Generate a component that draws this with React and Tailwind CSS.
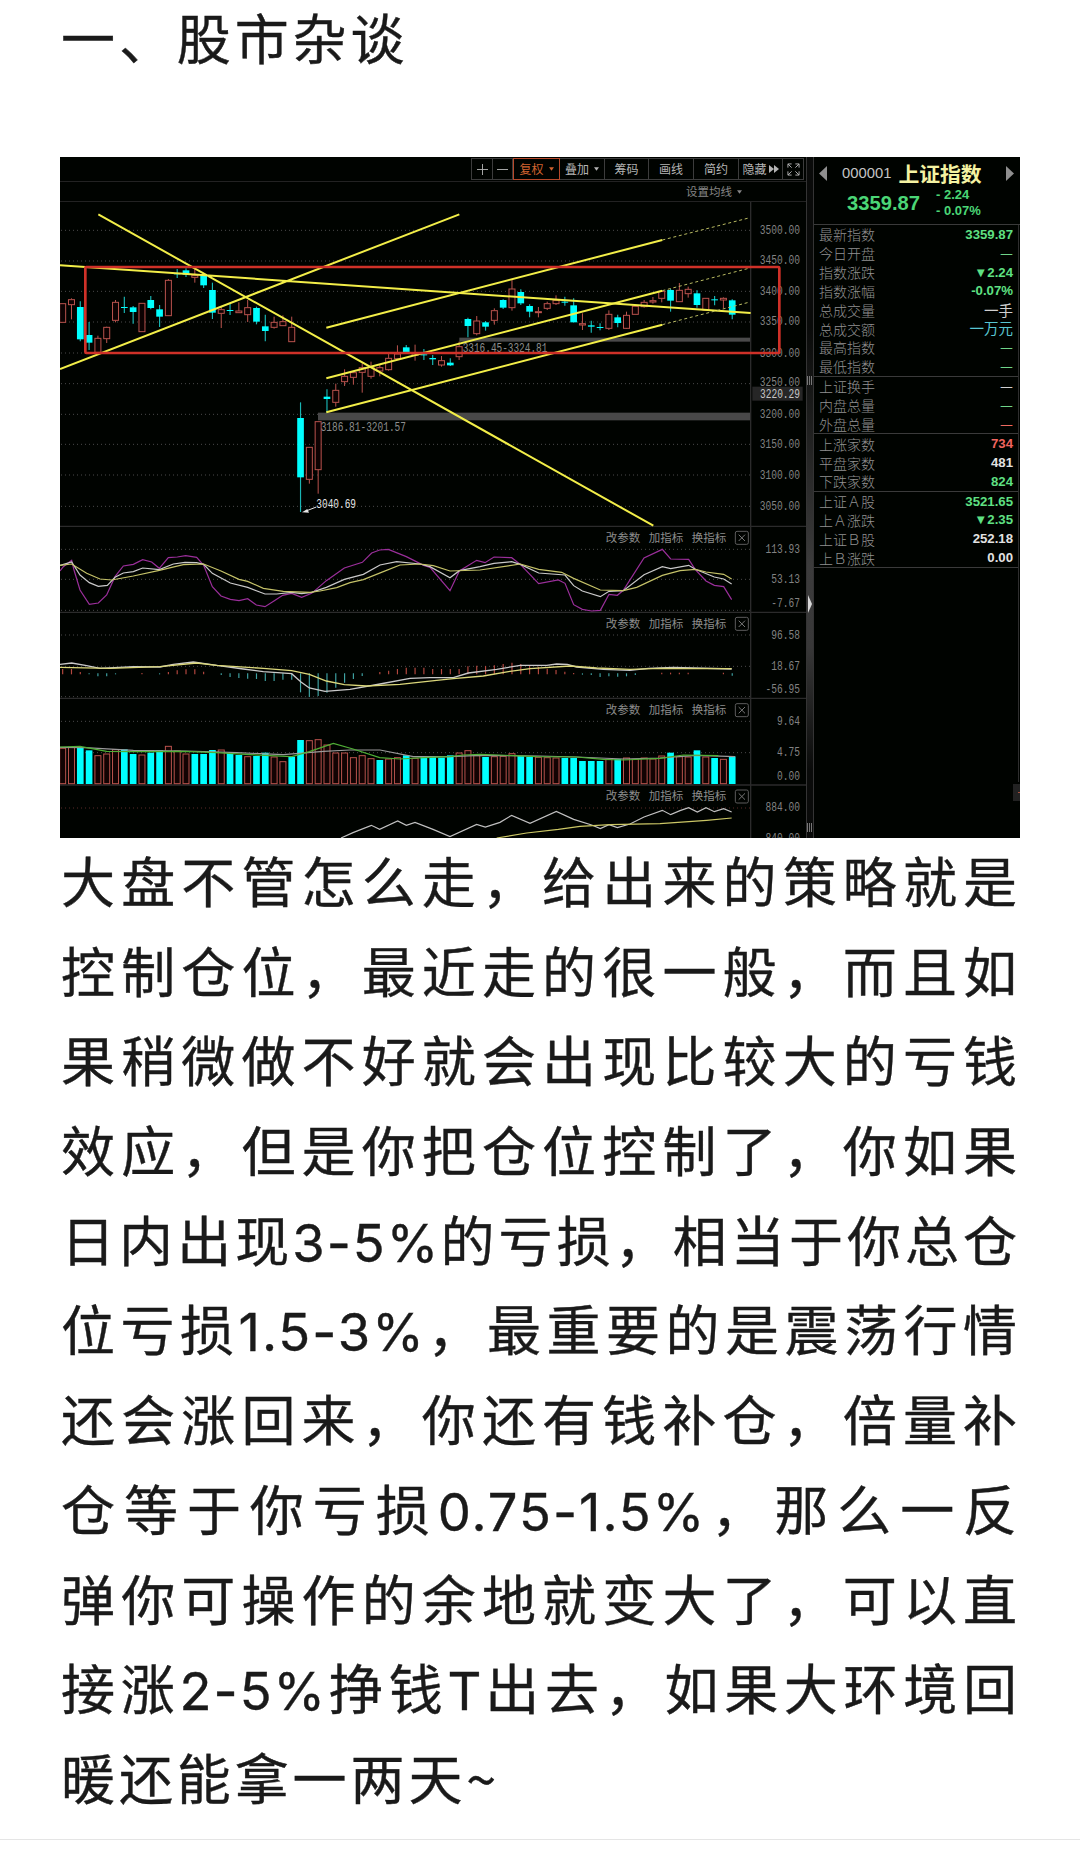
import React from 'react';

// Chart units are thirds of a pixel; bars sit on a fixed pitch
const barX = (i) => 38 + i * 26.43;

// [kind, high, bodyTop, bodyBottom, low]
const candles = [
  ['r', 461, 461, 517, 517], ['r', 445, 449, 464, 508], ['c', 454, 471, 568, 574], ['c', 516, 555, 578, 600],
  ['r', 557, 565, 607, 607], ['r', 530, 532, 566, 579], ['r', 450, 457, 511, 517], ['c', 440, 471, 474, 489],
  ['c', 468, 472, 486, 521], ['r', 460, 460, 545, 545], ['c', 438, 450, 474, 478], ['c', 465, 478, 500, 531],
  ['r', 387, 391, 497, 497], ['c', 357, 370, 373, 384], ['c', 355, 361, 374, 381], ['r', 356, 376, 382, 398],
  ['c', 372, 377, 406, 414], ['c', 398, 420, 488, 507], ['r', 470, 479, 490, 534], ['c', 460, 480, 483, 495],
  ['r', 457, 483, 488, 488], ['r', 450, 473, 494, 516], ['c', 470, 474, 515, 523], ['c', 494, 529, 543, 574],
  ['r', 500, 517, 532, 536], ['r', 496, 515, 527, 527], ['r', 500, 532, 575, 575], ['c', 757, 804, 982, 1086],
  ['r', 892, 892, 988, 1001], ['r', 815, 815, 959, 1031], ['c', 718, 740, 747, 788], ['r', 701, 721, 757, 770],
  ['r', 658, 679, 695, 708], ['r', 665, 668, 682, 704], ['r', 640, 653, 667, 728], ['r', 635, 652, 679, 686],
  ['r', 645, 653, 663, 679], ['r', 612, 625, 659, 662], ['r', 586, 612, 626, 626], ['c', 585, 592, 607, 612],
  ['r', 584, 610, 616, 632], ['c', 597, 613, 616, 630], ['c', 615, 624, 628, 645], ['r', 618, 632, 645, 650],
  ['c', 625, 638, 646, 648], ['r', 575, 590, 620, 630], ['c', 503, 507, 528, 562], ['r', 498, 513, 551, 556],
  ['c', 513, 517, 530, 542], ['r', 475, 482, 511, 524], ['c', 448, 450, 473, 477], ['r', 388, 417, 473, 482],
  ['c', 418, 426, 460, 465], ['c', 463, 468, 485, 502], ['r', 471, 485, 488, 502], ['r', 455, 461, 475, 480],
  ['r', 436, 451, 461, 465], ['c', 440, 455, 458, 467], ['c', 445, 466, 517, 517], ['r', 490, 521, 525, 540],
  ['c', 512, 526, 530, 548], ['c', 520, 531, 534, 541], ['r', 481, 493, 535, 540], ['c', 494, 502, 519, 532],
  ['r', 485, 496, 535, 537], ['r', 465, 469, 493, 493], ['r', 450, 457, 470, 473], ['r', 441, 452, 456, 461],
  ['r', 420, 424, 445, 457], ['c', 417, 420, 452, 485], ['r', 399, 421, 455, 455], ['r', 410, 418, 431, 443],
  ['c', 421, 430, 465, 473], ['r', 445, 445, 480, 480], ['c', 438, 448, 451, 466], ['r', 442, 445, 450, 475],
  ['c', 448, 451, 494, 508],
];

const volumes =
  'r414 r411 c411 c421 r436 r431 r418 c418 c432 r434 c428 c420 r408 r422 r431 c432 c432 c420 r419 c429 c435 r439 c438 c428 r440 r454 c440 c390 r391 r388 r404 r428 r428 r442 r436 r445 c450 r446 r442 c436 r444 c438 c438 c443 c436 r428 r421 r436 c441 r439 r438 r430 c438 c441 r441 r442 r443 c444 c444 c453 c453 c453 r447 c447 r443 r447 r443 r446 r437 c428 r439 r440 c421 r440 c444 r447 c439'
    .split(' ')
    .map((v) => [v[0], Number(v.slice(1))]);

// end of each histogram bar, null where there is none
const macd = [
  177, 177, 186, 193, 199, 199, 193, null, null, 189, null, 193, 186, 181, 178, 178, 185, null, 195, 201, 204, 206, 207,
  213, 213, 209, 209, 247, 261, 258, 248, 233, 218, 207, 198, null, 186, 182, 177, 173, 173, 173, 177, 177, 177, 177, 169,
  167, 168, 166, 162, 158, 162, 166, 170, 176, 180, 185, 189, 194, 195, 201, 199, 200, 199, 195, null, null, 188, 188, 188,
  188, null, null, null, 188, 197,
];

const axisLabels = [
  ['3500.00', 241], ['3450.00', 332], ['3400.00', 424], ['3350.00', 515], ['3300.00', 609], ['3250.00', 697],
  ['3200.00', 792], ['3150.00', 883], ['3100.00', 975], ['3050.00', 1069],
  ['113.93', 1197], ['53.13', 1288], ['-7.67', 1360],
  ['96.58', 1455], ['18.67', 1548], ['-56.95', 1619],
  ['9.64', 1713], ['4.75', 1808], ['0.00', 1879],
  ['884.00', 1973], ['840.00', 2064],
];

const gridLines = [241, 333, 424, 516, 609, 701, 793, 883, 975, 1069, 1198, 1288, 1381, 1455, 1549, 1640, 1714, 1808];

const quoteGroups = [
  [
    ['最新指数', '3359.87', 'text-[#5fe083]'],
    ['今日开盘', '—', 'text-[#6fd488]'],
    ['指数涨跌', '▼2.24', 'text-[#5fe083]'],
    ['指数涨幅', '-0.07%', 'text-[#5fe083]'],
    ['总成交量', '一手', 'text-[#d0d0d0]'],
    ['总成交额', '一万元', 'text-[#58c6d2]'],
    ['最高指数', '—', 'text-[#6fd488]'],
    ['最低指数', '—', 'text-[#6fd488]'],
  ],
  [
    ['上证换手', '—', 'text-[#d0d0d0]'],
    ['内盘总量', '—', 'text-[#6fd488]'],
    ['外盘总量', '—', 'text-[#ee6a60]'],
  ],
  [
    ['上涨家数', '734', 'text-[#f0655f]'],
    ['平盘家数', '481', 'text-[#e2e2e2]'],
    ['下跌家数', '824', 'text-[#5fe083]'],
  ],
  [
    ['上证Ａ股', '3521.65', 'text-[#5fe083]'],
    ['上Ａ涨跌', '▼2.35', 'text-[#5fe083]'],
    ['上证Ｂ股', '252.18', 'text-[#e2e2e2]'],
    ['上Ｂ涨跌', '0.00', 'text-[#e2e2e2]'],
  ],
];

const lines = [
  '大盘不管怎么走，给出来的策略就是',
  '控制仓位，最近走的很一般，而且如',
  '果稍微做不好就会出现比较大的亏钱',
  '效应，但是你把仓位控制了，你如果',
  '日内出现3-5%的亏损，相当于你总仓',
  '位亏损1.5-3%，最重要的是震荡行情',
  '还会涨回来，你还有钱补仓，倍量补',
  '仓等于你亏损0.75-1.5%，那么一反',
  '弹你可操作的余地就变大了，可以直',
  '接涨2-5%挣钱T出去，如果大环境回',
];

// figures and latin letters are set tighter than the hanzi around them
function Line({ text }) {
  return text.split(/([0-9A-Z.%-]+)/).map((part, i) =>
    i % 2 ? (
      <span key={i} className="-ml-[1px] font-['Inter',sans-serif] text-[52.5px] leading-none tracking-[2px]">{part}</span>
    ) : (
      part
    )
  );
}

function ToolButton({ children, className }) {
  return (
    <div className={`flex items-center justify-center border-r border-[#3c3c3c] text-[12px] leading-none text-[#b4b4b4] ${className}`}>
      {children}
    </div>
  );
}

function Caret() {
  return (
    <svg viewBox="0 0 6 4" className="ml-[5px] w-[5px] h-[4px]" fill="currentColor">
      <path d="M0 0h6L3 4z" />
    </svg>
  );
}

function Toolbar() {
  return (
    <div className="flex justify-end h-[25px] pt-[1px] pr-[2px] pb-[1px] border-b border-[#222]">
      <div className="flex h-[22px] border border-r-0 border-[#3c3c3c]">
        <ToolButton className="w-[21px]">
          <svg viewBox="0 0 12 12" className="w-[11px] h-[11px]" stroke="currentColor"><path d="M6 0v12M0 6h12" /></svg>
        </ToolButton>
        <ToolButton className="w-[20px]">
          <svg viewBox="0 0 12 12" className="w-[11px] h-[11px]" stroke="currentColor"><path d="M0 6h12" /></svg>
        </ToolButton>
        <div className="flex items-center justify-center w-[47px] -my-px border border-[#b8492b] text-[12px] leading-none text-[#d0622f]">
          复权<Caret />
        </div>
        <ToolButton className="w-[45px]">叠加<Caret /></ToolButton>
        <ToolButton className="w-[44px]">筹码</ToolButton>
        <ToolButton className="w-[45px]">画线</ToolButton>
        <ToolButton className="w-[45px]">简约</ToolButton>
        <ToolButton className="w-[44px]">
          隐藏
          <svg viewBox="0 0 10 8" className="ml-[2px] w-[10px] h-[8px]" fill="currentColor"><path d="M0 0l5 4-5 4zM5 0l5 4-5 4z" /></svg>
        </ToolButton>
        <ToolButton className="w-[21px]">
          <svg viewBox="0 0 14 14" className="w-[13px] h-[13px]" fill="none" stroke="currentColor">
            <path d="M1 5V1h4M1 1l4 4M9 1h4v4M13 1L9 5M1 9v4h4M1 13l4-4M13 9v4H9M13 13L9 9" />
          </svg>
        </ToolButton>
      </div>
    </div>
  );
}

function IndicatorHeader({ y }) {
  return (
    <g>
      <g fill="#8c8c8c" fontSize="34.5">
        <text x="1667" y={y + 12}>改参数</text>
        <text x="1796" y={y + 12}>加指标</text>
        <text x="1925" y={y + 12}>换指标</text>
      </g>
      <g fill="none" stroke="#5c5c5c" strokeWidth="3">
        <rect x="2056" y={y - 19} width="39" height="39" rx="5" />
        <path d={`M2066 ${y - 9}l19 19M2085 ${y - 9}l-19 19`} stroke="#777" />
      </g>
    </g>
  );
}

function Chart() {
  return (
    <svg viewBox="30 156 2238 1908" className="block w-[746px] h-[636px]">
      {/* grid */}
      <g stroke="#4a4a4a" strokeWidth="3" strokeDasharray="3 9">
        {gridLines.map((y) => (
          <path key={y} d={`M33 ${y}H2108`} />
        ))}
        <path d="M33 1974H2108" stroke="#5a2a28" />
      </g>
      <g stroke="#2b2b2b" strokeWidth="4">
        <path d="M30 1129H2268M30 1387H2268M30 1645H2268M30 1905H2268" />
        <path d="M2102 156V2064" />
      </g>

      {/* price gaps */}
      <rect x="1228" y="563" width="872" height="12" fill="#4a4a4a" />
      <rect x="804" y="788" width="1296" height="23" fill="#484848" />

      {/* candles */}
      {candles.map(([kind, high, top, bottom, low], i) => {
        const x = barX(i);
        if (kind === 'c') {
          return (
            <g key={i}>
              <path d={`M${x} ${high}V${low}`} stroke="#19b5b3" strokeWidth="3.5" />
              <rect x={x - 10} y={top} width="20" height={bottom - top} fill="#00ffff" />
            </g>
          );
        }
        return (
          <g key={i} stroke="#b9534d" strokeWidth="3" fill="#0d0202">
            <path d={`M${x} ${high}V${top}M${x} ${bottom}V${low}`} />
            <rect x={x - 9} y={top} width="18" height={bottom - top} />
          </g>
        );
      })}

      {/* trend lines */}
      <g stroke="#f2ee48" strokeWidth="6" fill="none">
        <path d="M145 193L1810 1127M30 657L1228 193M30 346L2102 489" />
        <path d="M829 533L1837 270M829 685L1837 422M829 787L1837 524" />
        <path d="M1837 270L2100 203M1837 422L2100 354M1837 524L2100 456" stroke="#b9bb62" strokeWidth="3" strokeDasharray="9 8" />
      </g>

      <g fontFamily='"Liberation Mono", monospace' fontSize="36">
        <text x="1238" y="606" textLength="254" lengthAdjust="spacingAndGlyphs" fill="#8d8d8d">3316.45-3324.81</text>
        <text x="812" y="843" textLength="256" lengthAdjust="spacingAndGlyphs" fill="#8d8d8d">3186.81-3201.57</text>
        <text x="799" y="1074" textLength="119" lengthAdjust="spacingAndGlyphs" fill="#e6e6e6">3040.69</text>
        <g fill="#828282">
          {axisLabels.map(([label, y]) => (
            <text key={label} x={2250 - label.length * 17.2} y={y + 11} textLength={label.length * 17.2} lengthAdjust="spacingAndGlyphs">
              {label}
            </text>
          ))}
        </g>
        <rect x="2107" y="710" width="151" height="42" fill="#262626" />
        <text x="2130" y="743" textLength="120" lengthAdjust="spacingAndGlyphs" fill="#c6c6c6">3220.29</text>
      </g>
      <path d="M799 1071L768 1083" stroke="#e6e6e6" strokeWidth="3" />
      <path d="M756 1087L772 1077L777 1088z" fill="#e6e6e6" />

      <rect x="106" y="351" width="2082" height="258" rx="3" fill="none" stroke="#cf3128" strokeWidth="8" />

      {/* oscillator */}
      <g transform="translate(0 690)" fill="none" strokeWidth="3.6">
        <polyline stroke="#9a2f9a" points="30,573 40,560 65,541 72,570 90,630 118,673 145,669 170,645 195,590 220,558 250,553 278,539 305,546 328,565 355,533 382,531 407,527 440,532 461,556 487,620 513,648 541,658 567,662 593,656 619,675 645,680 673,662 698,646 725,640 755,652 785,640 829,602 883,564 937,547 965,519 989,510 1015,508 1069,530 1121,556 1140,562 1200,632 1228,573 1280,541 1305,548 1332,531 1385,533 1411,553 1466,611 1525,600 1545,610 1571,674 1597,688 1625,693 1651,691 1677,643 1702,646 1720,631 1782,534 1837,508 1862,537 1916,538 1936,569 1968,603 1993,616 2021,620 2045,659" />
        <polyline stroke="#c9c9c9" points="30,556 65,546 90,585 118,608 145,619 172,616 195,592 220,579 250,575 278,564 328,569 370,552 405,547 440,548 461,553 487,580 541,609 593,622 645,642 680,642 725,637 755,641 785,637 829,622 883,598 940,583 990,555 1040,545 1110,552 1140,560 1200,593 1228,572 1290,560 1332,550 1385,545 1411,553 1466,579 1545,585 1571,617 1597,633 1651,650 1677,634 1720,632 1782,584 1837,560 1862,566 1916,556 1936,568 1993,591 2021,597 2045,612" />
        <polyline stroke="#c4c268" points="30,556 65,552 110,580 150,597 185,600 250,588 328,571 400,554 461,552 513,573 567,598 593,604 640,625 700,634 780,637 810,633 860,623 900,608 940,599 1000,575 1050,555 1110,552 1150,557 1200,573 1290,570 1411,552 1466,568 1535,577 1571,595 1651,630 1720,632 1760,622 1837,586 1890,572 1936,568 1968,576 2021,583 2045,597" />
      </g>

      {/* macd and volume */}
      <g transform="translate(0 1380)" fill="none">
        {macd.map((y, i) =>
          y === null ? null : (
            <path key={i} d={`M${barX(i)} ${y < 191 ? 193 : 190}V${y}`} stroke={y < 191 ? '#b5483f' : '#3fa3a3'} strokeWidth="3.5" />
          )
        )}
        <g strokeWidth="4">
          <polyline stroke="#c9c9c9" points="30,163 65,159 110,167 150,175 250,170 330,171 370,163 430,156 500,166 580,177 640,185 725,191 753,216 778,234 825,244 900,238 990,222 1080,205 1140,203 1210,203 1255,189 1340,178 1411,166 1490,166 1520,162 1552,163 1580,171 1660,178 1740,181 1795,175 1870,172 2045,177" />
          <polyline stroke="#dad77a" points="30,172 180,175 330,170 440,159 500,166 640,175 725,182 778,193 829,213 883,224 950,228 1050,223 1160,211 1210,206 1300,198 1380,184 1440,176 1560,168 1640,174 1740,178 1830,175 2045,176" />
        </g>
        {volumes.map(([kind, top], i) =>
          kind === 'c' ? (
            <rect key={i} x={barX(i) - 10} y={top} width="20" height={522 - top} fill="#00ffff" />
          ) : (
            <rect key={i} x={barX(i) - 9} y={top + 1} width="18" height={520 - top} fill="#120303" stroke="#b9534d" strokeWidth="3" />
          )
        )}
        <g strokeWidth="3.6">
          <polyline stroke="#9a9a9a" points="30,412 105,413 250,421 410,423 560,428 700,434 820,424 900,420 990,420 1090,440 1200,440 1290,436 1470,438 1580,441 1720,447 1830,444 1940,436 2055,440" />
          <polyline stroke="#4fae35" points="30,411 90,409 170,424 250,425 400,424 500,428 600,434 725,440 778,425 850,400 909,417 989,443 1050,447 1120,443 1200,440 1240,435 1290,433 1345,435 1460,440 1580,441 1660,448 1720,450 1830,445 1900,435 2005,437" />
          <polyline stroke="#c0c0c0" points="873,684 909,668 964,646 989,658 1043,633 1069,646 1095,637 1149,658 1200,680 1280,643 1306,651 1350,637 1385,616 1440,640 1519,604 1571,628 1625,645 1651,656 1677,644 1702,653 1740,642 1782,621 1837,601 1862,614 1890,602 1916,593 1942,606 1968,593 1993,605 2021,596 2045,606" />
          <polyline stroke="#cbc765" points="1340,684 1430,669 1525,658 1590,649 1680,644 1830,641 1970,631 2045,624" />
        </g>
      </g>

      <IndicatorHeader y={1163} />
      <IndicatorHeader y={1421} />
      <IndicatorHeader y={1680} />
      <IndicatorHeader y={1939} />
    </svg>
  );
}

function Splitter() {
  return (
    <svg viewBox="0 0 8 681" className="shrink-0 w-[8px] h-[681px]">
      <defs>
        <linearGradient id="track" x1="0" y1="0" x2="0" y2="1">
          <stop offset="0.25" stopColor="#0a0b0a" />
          <stop offset="0.6" stopColor="#3c3c3c" />
          <stop offset="0.72" stopColor="#383838" />
          <stop offset="0.9" stopColor="#0a0b0a" />
        </linearGradient>
      </defs>
      <rect width="8" height="681" fill="url(#track)" />
      <path d="M.5 0V681M7.5 0V681" stroke="#343434" />
      <path d="M1.5 219v9M3.5 219v9M5.5 219v9M1.5 666v9M3.5 666v9M5.5 666v9" stroke="#777" />
      <path d="M2 438l4 9-4 9z" fill="#d8d8d8" />
    </svg>
  );
}

function QuotePanel() {
  return (
    <div className="relative w-[206px] h-[681px] text-[14px]">
      <div className="h-[68px] pt-[4px] border-b border-[#3a3a3a]">
        <div className="flex items-center h-[24px] pl-[5px] pr-[6px]">
          <svg viewBox="0 0 8 15" className="w-[8px] h-[15px]" fill="#8f8f8f"><path d="M8 0v15L0 7.5z" /></svg>
          <span className="ml-[15px] font-['Liberation_Sans',sans-serif] text-[14.8px] text-[#c4c4c4]">000001</span>
          <span className="ml-[7px] text-[20.8px] leading-[22px] font-bold text-[#f4f2a2]">上证指数</span>
          <svg viewBox="0 0 8 15" className="ml-auto w-[8px] h-[15px]" fill="#8f8f8f"><path d="M0 0v15l8-7.5z" /></svg>
        </div>
        <div className="flex items-center h-[36px] pl-[33px] font-['Liberation_Sans',sans-serif] font-bold text-[#4bd676]">
          <span className="w-[89px] text-[20.2px]">3359.87</span>
          <div className="text-[13px] leading-[16px]">
            <div>- 2.24</div>
            <div>- 0.07%</div>
          </div>
        </div>
      </div>
      <div className="h-[557px] mr-[1px] border-r border-[#2e2e2e]">
        {quoteGroups.map((group, g) => (
          <div key={g} className="border-b border-[#3a3a3a]">
            {group.map(([label, value, color]) => (
              <div key={label} className="flex items-center justify-between h-[18.85px] pl-[5px] pr-[5px]">
                <span className="font-light leading-none text-[#909090]">{label}</span>
                <span
                  className={`leading-none ${color} ${
                    /[一—]/.test(value) ? 'text-[14.5px]' : "font-['Liberation_Sans','DejaVu_Sans',sans-serif] text-[13.2px] font-bold"
                  }`}
                >
                  {value}
                </span>
              </div>
            ))}
          </div>
        ))}
      </div>
      <div className="absolute right-0 bottom-[37px] flex items-center justify-end w-[7px] h-[17px] bg-[#222]">
        <div className="w-[2px] h-[1px] bg-[#a8503c]" />
      </div>
    </div>
  );
}

export default function App() {
  return (
    <div className="w-[1080px] h-[1857px] overflow-hidden bg-white font-['Noto_Sans_CJK_SC',sans-serif] text-[#1a1a1a]" lang="zh-CN">
      <article className="h-[1840px] px-[60px] border-b border-[#e5e5e5]">
        <h1 className="h-[157px] pl-[1px] text-[54px] leading-[74px] tracking-[3.9px] [-webkit-text-stroke:0.4px]">一、股市杂谈</h1>

        <div className="flex h-[681px] overflow-hidden bg-[#000300]">
          <div className="w-[746px]">
            <Toolbar />
            <div className="flex items-center justify-end h-[20px] pt-[1px] pr-[64px] border-b border-[#222] text-[11.5px] leading-none text-[#858585]">
              设置均线
              <Caret />
            </div>
            <Chart />
          </div>
          <Splitter />
          <QuotePanel />
        </div>

        <div className="-mt-[3px] pl-[1px] -mr-[1px] text-[54px] leading-[89.7px] tracking-[3.9px] [-webkit-text-stroke:0.4px]">
          {lines.map((line) => (
            <p key={line} className="h-[89.7px] whitespace-nowrap text-justify [text-align-last:justify]"><Line text={line} /></p>
          ))}
          <p>暖还能拿一两天~</p>
        </div>
      </article>
    </div>
  );
}
